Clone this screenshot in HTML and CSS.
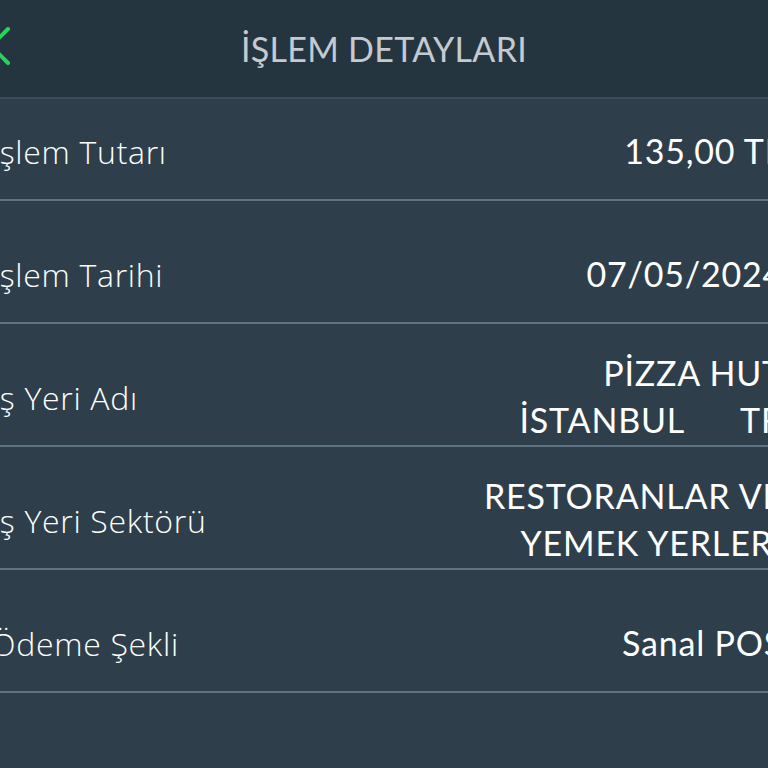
FILE: index.html
```html
<!DOCTYPE html>
<html lang="tr">
<head>
    <meta charset="UTF-8">
    <meta name="viewport" content="width=device-width, initial-scale=1.0">
    <title>İşlem Detayları</title>
    <link rel="stylesheet" href="styles.css">
</head>
<body>
    <div class="header">
        <a class="back" href="#">
            <svg width="24" height="40" viewBox="0 0 24 40">
                <path d="M20 2 L3 19 L20 36" fill="none" stroke="#27d35a" stroke-width="4" stroke-linecap="round" stroke-linejoin="round"/>
            </svg>
        </a>
        <div class="title">İŞLEM DETAYLARI</div>
        <div></div>
    </div>

    <div class="rows">
        <div class="row">
            <div class="label">İşlem Tutarı</div>
            <div class="value">135,00 TL</div>
        </div>
        <div class="row">
            <div class="label">İşlem Tarihi</div>
            <div class="value">07/05/2024</div>
        </div>
        <div class="row">
            <div class="label">İş Yeri Adı</div>
            <div class="value">PİZZA HUT
İSTANBUL      TR</div>
        </div>
        <div class="row">
            <div class="label">İş Yeri Sektörü</div>
            <div class="value">RESTORANLAR VE
YEMEK YERLERİ</div>
        </div>
        <div class="row">
            <div class="label">Ödeme Şekli</div>
            <div class="value">Sanal POS</div>
        </div>
    </div>
</body>
</html>
```

FILE: styles.css
```css
body {
    margin: 0;
    height: 100vh;
    overflow: hidden;
    background-color: #2e3f4b;
    font-family: Lato, "Open Sans", sans-serif;
    color: #fff;
}

.header {
    display: grid;
    grid-template-columns: 1fr auto 1fr;
    align-items: center;
    height: 97px;
    background-color: #243540;
    border-bottom: 2px solid #3a4d5a;
}

.back {
    display: flex;
    margin-left: -12px;
    margin-top: -4px;
}

.title {
    font-size: 34px;
    font-weight: 400;
    color: #c5cad0;
    letter-spacing: 0.3px;
}

.rows {
    display: flex;
    flex-direction: column;
    gap: 21px;
    margin: 0 -15px 0 -9px;
}

.row {
    display: flex;
    justify-content: space-between;
    align-items: center;
    height: 100px;
    border-bottom: 2px solid #5f7483;
}

.label {
    font-family: "Open Sans", Lato, sans-serif;
    font-size: 32px;
    font-weight: 300;
    letter-spacing: 0.7px;
    margin-top: 4px;
}

.value {
    font-size: 34px;
    line-height: 47px;
    letter-spacing: 0.8px;
    text-align: right;
    white-space: pre;
    margin-top: 2px;
}
```
